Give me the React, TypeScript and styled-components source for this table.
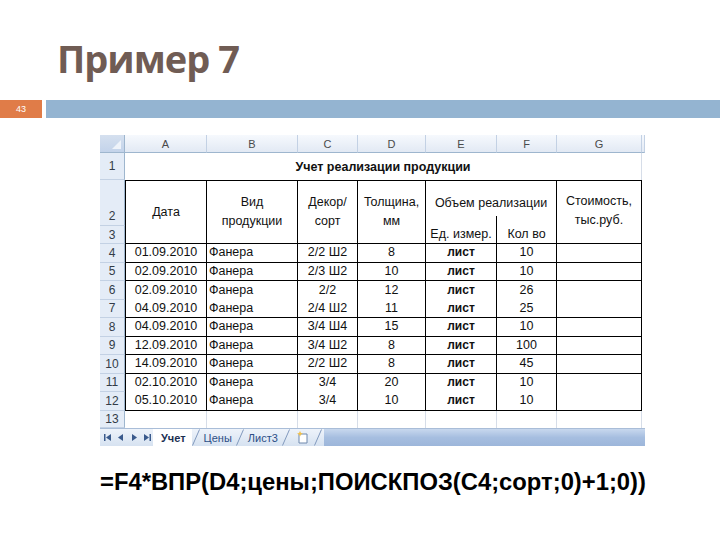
import React from "react";
import styled, { createGlobalStyle } from "styled-components";

const Global = createGlobalStyle`
  html, body { margin: 0; padding: 0; background: #fff; }
  body { width: 720px; height: 540px; overflow: hidden; font-family: "Liberation Sans", Arial, sans-serif; }
`;

const Slide = styled.div`
  width: 720px;
  height: 540px;
  display: flex;
  flex-direction: column;
  background: #fff;
`;

const Title = styled.h1`
  margin: 0;
  height: 100px;
  box-sizing: border-box;
  padding: 32px 0 0 57px;
  font-family: "Open Sans", sans-serif;
  font-weight: 700;
  font-size: 38px;
  line-height: 52px;
  letter-spacing: -1px;
  color: #705c54;
`;

const NumberBar = styled.div`
  display: flex;
  height: 18px;
  gap: 4px;
`;

const SlideNo = styled.div`
  width: 42px;
  background: #e07c48;
  color: #fff;
  font-size: 9px;
  display: flex;
  align-items: center;
  justify-content: center;
`;

const Rule = styled.div`
  flex: 1;
  background: #94b4d1;
`;

const Sheet = styled.div`
  margin: 17px 0 0 100px;
  width: 545px;
  display: flex;
  flex-direction: column;
  font-family: "Liberation Sans", Arial, sans-serif;
`;

const Grid = styled.div`
  display: grid;
  grid-template-columns: 25px 82px 91px 60px 68px 71px 60px 85px 3px;
  grid-template-rows: 18px 27px 46px 18px repeat(9, 18.5px) 17.5px;
  font-size: 12.5px;
  color: #111;
  background: #fff;
`;

const Corner = styled.div`
  background: linear-gradient(#d5e0ef, #c3d3ea);
  border-right: 1px solid #9eb6ce;
  border-bottom: 1px solid #9eb6ce;
  display: flex;
  align-items: flex-end;
  justify-content: flex-end;
  padding: 0 3px 3px 0;
  box-sizing: border-box;
`;

const ColHead = styled.div`
  background: linear-gradient(#f6f9fd, #e2e9f4);
  border-right: 1px solid #c3d1e4;
  border-bottom: 1px solid #9eb6ce;
  color: #4a4a4a;
  font-size: 11px;
  display: flex;
  align-items: center;
  justify-content: center;
`;

const RowHead = styled.div<{ $end?: boolean }>`
  background: #e4ecf7;
  border-right: 1px solid #9eb6ce;
  border-bottom: 1px solid #c3d1e4;
  color: #333c48;
  font-size: 12px;
  display: flex;
  justify-content: center;
  align-items: ${(p) => (p.$end ? "flex-end" : "center")};
  padding-bottom: ${(p) => (p.$end ? "2px" : "0")};
  box-sizing: border-box;
`;

const Blank = styled.div<{ $rs?: number }>`
  grid-row: span ${(p) => p.$rs ?? 1};
`;

const TitleCell = styled.div`
  grid-column: span 7;
  display: flex;
  align-items: center;
  justify-content: center;
  padding-top: 1px;
  font-weight: 700;
  border-right: 1px solid #d6dde8;
`;

const Cell = styled.div<{
  $align?: "left" | "center";
  $bold?: boolean;
  $first?: boolean;
  $top?: boolean;
  $open?: boolean;
  $rs?: number;
  $cs?: number;
  $small?: boolean;
  $lift?: number;
}>`
  position: relative;
  grid-row: span ${(p) => p.$rs ?? 1};
  grid-column: span ${(p) => p.$cs ?? 1};
  display: flex;
  align-items: center;
  justify-content: ${(p) => (p.$align === "left" ? "flex-start" : "center")};
  padding: 0 2px ${(p) => p.$lift ?? 0}px;
  text-align: center;
  line-height: 19px;
  font-weight: ${(p) => (p.$bold ? 700 : 400)};
  font-size: ${(p) => (p.$small ? "12px" : "12.5px")};
  white-space: nowrap;
  border-right: 1px solid #000;
  border-bottom: ${(p) => (p.$open ? "none" : "1px solid #000")};
  border-left: ${(p) => (p.$first ? "1px solid #000" : "none")};
  border-top: ${(p) => (p.$top ? "1px solid #000" : "none")};
`;

const UnitCell = styled(Cell)`
  &::before {
    content: "";
    position: absolute;
    right: -1px;
    top: -10px;
    width: 1px;
    height: 10px;
    background: #000;
  }
`;

const EmptyCell = styled.div`
  border-right: 1px solid #d6dde8;
`;

const TabBar = styled.div`
  display: flex;
  height: 17px;
  background: linear-gradient(#eef3fa, #d6e2f1);
  border-top: 1px solid #a9bdd8;
  font-size: 11px;
`;

const NavGroup = styled.div`
  width: 53px;
  display: flex;
  align-items: center;
  gap: 5px;
  padding-left: 4px;
  box-sizing: border-box;
`;

const Tab = styled.div<{ $active?: boolean }>`
  display: flex;
  align-items: center;
  padding: 0 ${(p) => (p.$active ? "6px 0 8px" : "4px")};
  background: ${(p) => (p.$active ? "#fff" : "transparent")};
  color: ${(p) => (p.$active ? "#1b2f52" : "#2d4f86")};
  font-weight: ${(p) => (p.$active ? 700 : 400)};
`;

const Scroll = styled.div`
  flex: 1;
  margin-left: 2px;
  background: linear-gradient(#c8d8ee, #a6bee0 50%, #9db6da);
`;

const Formula = styled.div`
  margin-top: 22px;
  padding-left: 100px;
  font-family: "Liberation Sans", Arial, sans-serif;
  font-weight: 700;
  font-size: 23.8px;
  line-height: 28px;
  color: #000;
  white-space: nowrap;
`;

type DataRow = { n: number; date: string; sort: string; th: string; qty: string; joinNext?: boolean };

const rows: DataRow[] = [
  { n: 4, date: "01.09.2010", sort: "2/2 Ш2", th: "8", qty: "10" },
  { n: 5, date: "02.09.2010", sort: "2/3 Ш2", th: "10", qty: "10" },
  { n: 6, date: "02.09.2010", sort: "2/2", th: "12", qty: "26", joinNext: true },
  { n: 7, date: "04.09.2010", sort: "2/4 Ш2", th: "11", qty: "25" },
  { n: 8, date: "04.09.2010", sort: "3/4 Ш4", th: "15", qty: "10" },
  { n: 9, date: "12.09.2010", sort: "3/4 Ш2", th: "8", qty: "100" },
  { n: 10, date: "14.09.2010", sort: "2/2 Ш2", th: "8", qty: "45" },
  { n: 11, date: "02.10.2010", sort: "3/4", th: "20", qty: "10", joinNext: true },
  { n: 12, date: "05.10.2010", sort: "3/4", th: "10", qty: "10" },
];

const NavIcon = ({ kind }: { kind: "first" | "prev" | "next" | "last" }) => {
  const c = "#3a5a8c";
  return (
    <svg width="8" height="7" viewBox="0 0 8 7">
      {kind === "first" && (
        <>
          <rect x="0" y="0" width="1.5" height="7" fill={c} />
          <path d="M7 0 L2 3.5 L7 7 Z" fill={c} />
        </>
      )}
      {kind === "prev" && <path d="M6 0 L1 3.5 L6 7 Z" fill={c} />}
      {kind === "next" && <path d="M2 0 L7 3.5 L2 7 Z" fill={c} />}
      {kind === "last" && (
        <>
          <path d="M1 0 L6 3.5 L1 7 Z" fill={c} />
          <rect x="6.5" y="0" width="1.5" height="7" fill={c} />
        </>
      )}
    </svg>
  );
};

const Slash = () => (
  <svg width="8" height="17" viewBox="0 0 8 17">
    <line x1="0.5" y1="16.5" x2="7.5" y2="0.5" stroke="#8199bd" strokeWidth="1" />
  </svg>
);

const NewSheetIcon = () => (
  <svg width="16" height="13" viewBox="0 0 16 13">
    <path d="M5 3 H13 V12 H5 Z" fill="#fff" stroke="#6f88ad" strokeWidth="1" />
    <path d="M5 2 L6 0 L7 2 L9 2.5 L7 3.5 L6 5.5 L5 3.5 L3 2.5 Z" fill="#f2c14b" />
  </svg>
);

const CornerMark = () => (
  <svg width="9" height="9" viewBox="0 0 9 9">
    <path d="M9 0 L9 9 L0 9 Z" fill="#eef3fa" />
  </svg>
);

export default function App() {
  const letters = ["A", "B", "C", "D", "E", "F", "G"];
  return (
    <>
      <Global />
      <Slide>
        <Title>Пример 7</Title>
        <NumberBar>
          <SlideNo>43</SlideNo>
          <Rule />
        </NumberBar>
        <Sheet>
          <Grid>
            <Corner>
              <CornerMark />
            </Corner>
            {letters.map((l) => (
              <ColHead key={l}>{l}</ColHead>
            ))}
            <ColHead />

            <RowHead>1</RowHead>
            <TitleCell>Учет реализации продукции</TitleCell>
            <Blank />

            <RowHead $end>2</RowHead>
            <Cell $first $top $rs={2}>Дата</Cell>
            <Cell $top $rs={2}>
              Вид
              <br />
              продукции
            </Cell>
            <Cell $top $rs={2}>
              Декор/
              <br />
              сорт
            </Cell>
            <Cell $top $rs={2}>
              Толщина,
              <br />
              мм
            </Cell>
            <Cell $top $open $cs={2}>Объем реализации</Cell>
            <Cell $top $rs={2} $lift={3}>
              Стоимость,
              <br />
              тыс.руб.
            </Cell>
            <Blank $rs={2} />

            <RowHead>3</RowHead>
            <UnitCell>Ед. измер.</UnitCell>
            <Cell>Кол во</Cell>

            {rows.map((r) => (
              <React.Fragment key={r.n}>
                <RowHead>{r.n}</RowHead>
                <Cell $first $open={r.joinNext}>{r.date}</Cell>
                <Cell $align="left" $open={r.joinNext}>Фанера</Cell>
                <Cell $open={r.joinNext}>{r.sort}</Cell>
                <Cell $open={r.joinNext}>{r.th}</Cell>
                <Cell $bold $small $open={r.joinNext}>лист</Cell>
                <Cell $open={r.joinNext}>{r.qty}</Cell>
                <Cell $open={r.joinNext} />
                <Blank />
              </React.Fragment>
            ))}

            <RowHead>13</RowHead>
            {letters.map((l) => (
              <EmptyCell key={l} />
            ))}
            <Blank />
          </Grid>
          <TabBar>
            <NavGroup>
              <NavIcon kind="first" />
              <NavIcon kind="prev" />
              <NavIcon kind="next" />
              <NavIcon kind="last" />
            </NavGroup>
            <Tab $active>Учет</Tab>
            <Slash />
            <Tab>Цены</Tab>
            <Slash />
            <Tab>Лист3</Tab>
            <Slash />
            <Tab>
              <NewSheetIcon />
            </Tab>
            <Slash />
            <Scroll />
          </TabBar>
        </Sheet>
        <Formula>=F4*ВПР(D4;цены;ПОИСКПОЗ(С4;сорт;0)+1;0))</Formula>
      </Slide>
    </>
  );
}
